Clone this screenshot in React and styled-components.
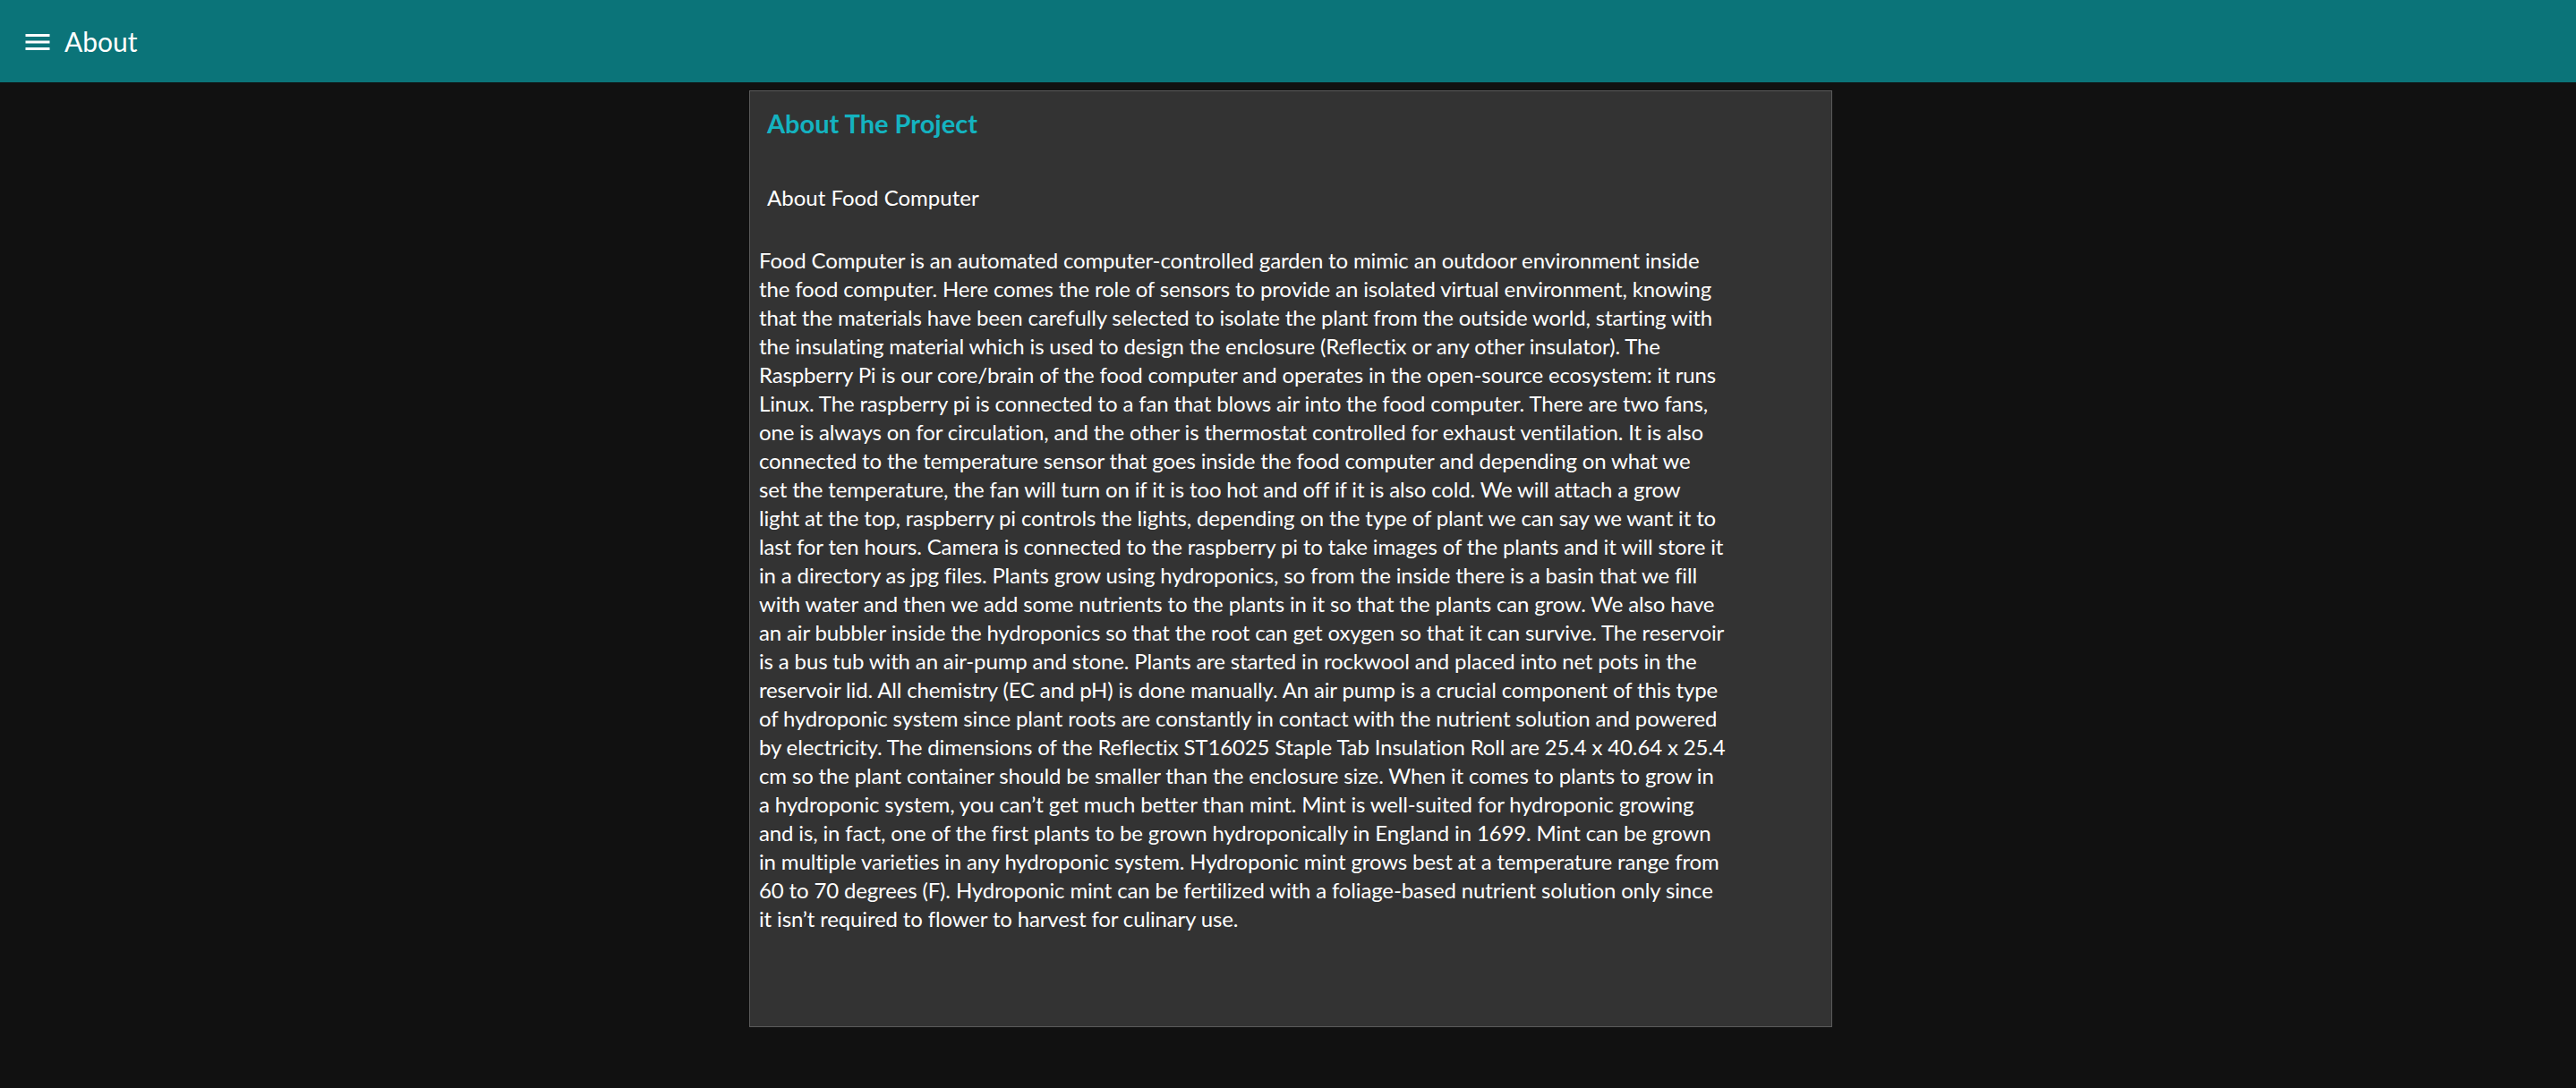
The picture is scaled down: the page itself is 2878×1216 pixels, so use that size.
import React from 'react';
import styled, { createGlobalStyle } from 'styled-components';

const GlobalStyle = createGlobalStyle`
  html, body {
    margin: 0;
    padding: 0;
    background: #111111;
    font-family: Lato, "Open Sans", sans-serif;
  }
`;

const Toolbar = styled.header`
  display: flex;
  align-items: center;
  height: 92px;
  padding-left: 24px;
  background: #0b7479;
  color: #ffffff;
`;

const MenuButton = styled.button`
  display: flex;
  align-items: center;
  justify-content: center;
  width: 36px;
  height: 36px;
  padding: 0;
  margin-top: 2px;
  border: none;
  background: transparent;
  color: inherit;
  cursor: pointer;
`;

const ToolbarTitle = styled.h1`
  margin: 0 0 0 12px;
  font-size: 30px;
  font-weight: 400;
  line-height: 36px;
`;

const Page = styled.main`
  display: flex;
  justify-content: center;
  padding: 9px 0 0 6px;
`;

const Card = styled.section`
  box-sizing: border-box;
  width: 1210px;
  height: 1047px;
  padding: 0 10px;
  background: #333333;
  border: 1px solid #5a5a5a;
  color: #ffffff;
`;

const Heading = styled.h2`
  margin: 18px 0 0 9px;
  font-size: 29px;
  font-weight: 700;
  line-height: 36px;
  color: #14b3c0;
`;

const SubHeading = styled.h3`
  margin: 49px 0 0 9px;
  font-size: 24px;
  font-weight: 400;
  line-height: 32px;
`;

// lines kept as in the original wrap
const Body = styled.p`
  margin: 38px 0 0;
  font-size: 24px;
  line-height: 32px;
  letter-spacing: -0.15px;
  white-space: pre-line;
`;

function MenuIcon() {
  return (
    <svg width="36" height="36" viewBox="0 0 24 24" fill="currentColor">
      <path d="M3 18h18v-2H3v2zm0-5h18v-2H3v2zm0-7v2h18V6H3z" />
    </svg>
  );
}

const lines = [
  'Food Computer is an automated computer-controlled garden to mimic an outdoor environment inside',
  'the food computer. Here comes the role of sensors to provide an isolated virtual environment, knowing',
  'that the materials have been carefully selected to isolate the plant from the outside world, starting with',
  'the insulating material which is used to design the enclosure (Reflectix or any other insulator). The',
  'Raspberry Pi is our core/brain of the food computer and operates in the open-source ecosystem: it runs',
  'Linux. The raspberry pi is connected to a fan that blows air into the food computer. There are two fans,',
  'one is always on for circulation, and the other is thermostat controlled for exhaust ventilation. It is also',
  'connected to the temperature sensor that goes inside the food computer and depending on what we',
  'set the temperature, the fan will turn on if it is too hot and off if it is also cold. We will attach a grow',
  'light at the top, raspberry pi controls the lights, depending on the type of plant we can say we want it to',
  'last for ten hours. Camera is connected to the raspberry pi to take images of the plants and it will store it',
  'in a directory as jpg files. Plants grow using hydroponics, so from the inside there is a basin that we fill',
  'with water and then we add some nutrients to the plants in it so that the plants can grow. We also have',
  'an air bubbler inside the hydroponics so that the root can get oxygen so that it can survive. The reservoir',
  'is a bus tub with an air-pump and stone. Plants are started in rockwool and placed into net pots in the',
  'reservoir lid. All chemistry (EC and pH) is done manually. An air pump is a crucial component of this type',
  'of hydroponic system since plant roots are constantly in contact with the nutrient solution and powered',
  'by electricity. The dimensions of the Reflectix ST16025 Staple Tab Insulation Roll are 25.4 x 40.64 x 25.4',
  'cm so the plant container should be smaller than the enclosure size. When it comes to plants to grow in',
  'a hydroponic system, you can\u2019t get much better than mint. Mint is well-suited for hydroponic growing',
  'and is, in fact, one of the first plants to be grown hydroponically in England in 1699. Mint can be grown',
  'in multiple varieties in any hydroponic system. Hydroponic mint grows best at a temperature range from',
  '60 to 70 degrees (F). Hydroponic mint can be fertilized with a foliage-based nutrient solution only since',
  'it isn\u2019t required to flower to harvest for culinary use.',
];

export default function App() {
  return (
    <>
      <GlobalStyle />
      <Toolbar>
        <MenuButton aria-label="menu">
          <MenuIcon />
        </MenuButton>
        <ToolbarTitle>About</ToolbarTitle>
      </Toolbar>
      <Page>
        <Card>
          <Heading>About The Project</Heading>
          <SubHeading>About Food Computer</SubHeading>
          <Body>{lines.join('\n')}</Body>
        </Card>
      </Page>
    </>
  );
}
